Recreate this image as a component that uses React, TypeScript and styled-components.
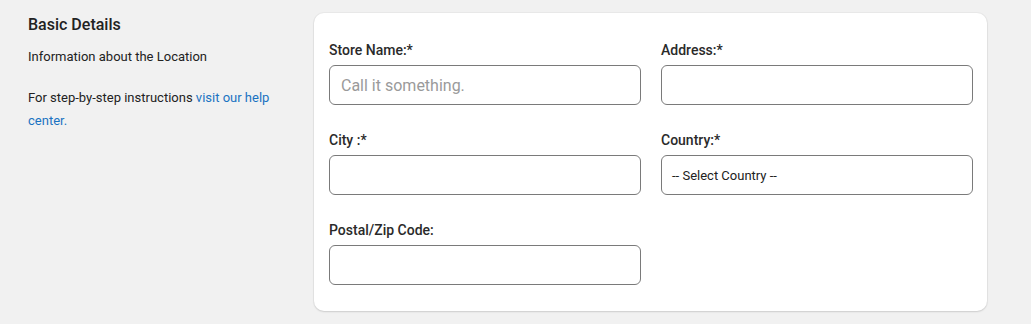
import React from 'react';
import styled, {createGlobalStyle} from 'styled-components';

const GlobalStyle = createGlobalStyle`
  html, body {
    margin: 0;
    padding: 0;
    background: #f1f1f1;
    font-family: Roboto, "Liberation Sans", Arial, sans-serif;
    color: #222;
  }
`;

const Page = styled.div`
  display: flex;
  padding: 13px 44px 13px 28px;
`;

const Intro = styled.div`
  width: 286px;
  flex-shrink: 0;
  padding-top: 2px;
`;

const Title = styled.h2`
  margin: 0;
  font-size: 16px;
  font-weight: 500;
  line-height: 20px;
  color: #222;
`;

const Text = styled.p<{$gap?: number}>`
  margin: ${p => p.$gap ?? 0}px 0 0;
  max-width: 250px;
  font-size: 13px;
  line-height: 23px;
  color: #222;

  a {
    color: #1a73c2;
    text-decoration: none;
  }
`;

const Card = styled.div`
  flex: 1;
  background: #fff;
  border-radius: 10px;
  box-shadow: 0 1px 2px rgba(0, 0, 0, 0.12), 0 0 0 1px rgba(0, 0, 0, 0.03);
  padding: 28px 14px 26px 15px;
  display: grid;
  grid-template-columns: 312px 312px;
  column-gap: 20px;
  row-gap: 26px;
`;

const Field = styled.div`
  display: flex;
  flex-direction: column;
`;

const Label = styled.label`
  font-size: 14px;
  font-weight: 500;
  line-height: 18px;
  margin-bottom: 6px;
  color: #2a2a2a;
`;

const Input = styled.input`
  box-sizing: border-box;
  height: 40px;
  width: 100%;
  border: 1px solid #7a7a7a;
  border-radius: 6px;
  padding: 0 11px;
  font-family: inherit;
  font-size: 16px;
  color: #222;
  background: #fff;
  outline: none;

  &::placeholder {
    color: #9a9a9a;
  }
`;

const Select = styled.div`
  box-sizing: border-box;
  height: 40px;
  border: 1px solid #7a7a7a;
  border-radius: 6px;
  padding: 0 10px;
  display: flex;
  align-items: center;
  font-size: 13px;
  color: #222;
  background: #fff;
`;

export default function App() {
  return (
    <>
      <GlobalStyle />
      <Page>
        <Intro>
          <Title>Basic Details</Title>
          <Text $gap={10}>Information about the Location</Text>
          <Text $gap={18}>
            For step-by-step instructions <a href="#">visit our help center.</a>
          </Text>
        </Intro>
        <Card>
          <Field>
            <Label>Store Name:*</Label>
            <Input placeholder="Call it something." />
          </Field>
          <Field>
            <Label>Address:*</Label>
            <Input />
          </Field>
          <Field>
            <Label>City :*</Label>
            <Input />
          </Field>
          <Field>
            <Label>Country:*</Label>
            <Select>-- Select Country --</Select>
          </Field>
          <Field>
            <Label>Postal/Zip Code:</Label>
            <Input />
          </Field>
        </Card>
      </Page>
    </>
  );
}
